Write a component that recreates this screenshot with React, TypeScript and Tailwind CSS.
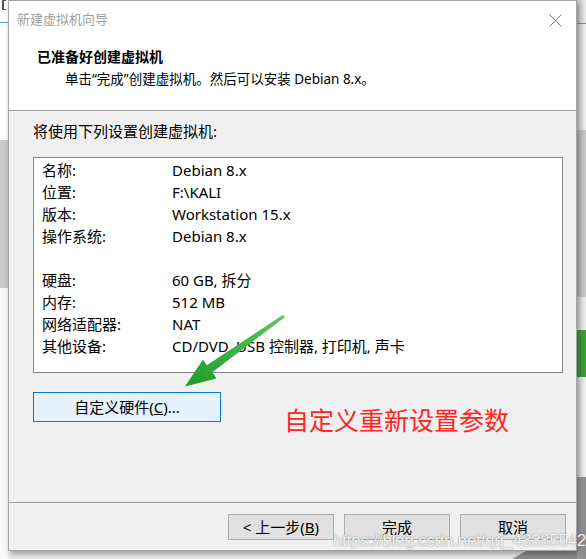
import React from "react";

const font = { fontFamily: '"Noto Sans", "Noto Sans CJK SC", sans-serif' };

const rows: [string, string][] = [
  ["名称:", "Debian 8.x"],
  ["位置:", "F:\\KALI"],
  ["版本:", "Workstation 15.x"],
  ["操作系统:", "Debian 8.x"],
  ["", ""],
  ["硬盘:", "60 GB, 拆分"],
  ["内存:", "512 MB"],
  ["网络适配器:", "NAT"],
  ["其他设备:", "CD/DVD, USB 控制器, 打印机, 声卡"],
];

function LeftStrip() {
  return (
    <div className="flex w-[8px] flex-col bg-white">
      <div className="h-[10px] w-[4px] ml-[2px] border-l-2 border-t border-b border-[#555]" />
      <div className="h-[12px]" />
      <div className="h-[1px] bg-[#5b9bd5]" />
      <div className="h-[117px]" />
      <div className="h-[148px] bg-[#c9c9c9]" />
      <div className="flex-1 bg-[#fafafa]" />
    </div>
  );
}

function RightStrip() {
  return (
    <div className="flex w-[9px] flex-col bg-[#f4f4f4]">
      <div className="h-[23px] bg-gradient-to-r from-[#c8c8c8] to-[#ececec]" />
      <div className="h-[1px] bg-[#5b9bd5]" />
      <div className="h-[106px] bg-gradient-to-r from-[#d0d0d0] to-[#f0f0f0]" />
      <div className="h-[167px] bg-gradient-to-r from-[#b8b8b8] to-[#cbcbcb]" />
      <div className="h-[33px] bg-gradient-to-r from-[#d8d8d8] to-[#eeeeee]" />
      <div className="h-[47px] bg-[#3f9a3f]" />
      <div className="h-[100px] bg-gradient-to-r from-[#d8d8d8] to-[#f2f2f2]" />
      <div className="flex-1 bg-gradient-to-r from-[#a0a0a0] to-[#8c8c8c]" />
    </div>
  );
}

export default function App() {
  return (
    <div className="flex h-[559px] w-[586px] overflow-hidden bg-white" style={font}>
      <LeftStrip />
      <div className="flex flex-col">
        <div className="relative z-10 flex h-[551px] w-[569px] flex-col border border-[#a5a5a5] bg-[#f0f0f0] shadow-[2px_3px_6px_rgba(0,0,0,0.35)]">
          {/* header */}
          <div className="flex h-[109px] flex-col bg-white">
            <div className="flex h-[38px] items-center justify-between pl-[8px] pr-[14px]">
              <span className="text-[13px] text-[#a0a0a0]">新建虚拟机向导</span>
              <svg width="13" height="13" viewBox="0 0 13 13">
                <path d="M0.5 0.5 L12.5 12.5 M12.5 0.5 L0.5 12.5" stroke="#7a7a7a" strokeWidth="1" />
              </svg>
            </div>
            <div className="pl-[28px] pt-[8px] text-[14px] font-bold leading-[20px] text-black">已准备好创建虚拟机</div>
            <div className="pl-[56px] pt-[2px] text-[13.5px] leading-[20px] text-black">
              单击“完成”创建虚拟机。然后可以安装 Debian 8.x。
            </div>
          </div>
          <div className="h-[1px] bg-[#a0a0a0]" />
          {/* body */}
          <div className="flex flex-1 flex-col pl-[24px] pr-[13px]">
            <div className="pt-[9px] text-[15px] leading-[22px] text-black">将使用下列设置创建虚拟机:</div>
            <div className="mt-[15px] flex h-[216px] flex-col border border-[#828790] bg-white pl-[8px] pt-[1px]">
              {rows.map(([k, v], i) => (
                <div key={i} className="flex h-[22px] items-center text-[15px] text-black">
                  <span className="w-[130px]">{k}</span>
                  <span>{v}</span>
                </div>
              ))}
            </div>
            <div className="mt-[19px] flex items-start">
              <button className="flex h-[30px] w-[188px] items-center justify-center border border-[#0078d7] bg-[#e5f1fb] text-[15px] text-black">
                自定义硬件(<span className="underline">C</span>)...
              </button>
              <span className="ml-[63px] mt-[13px] text-[25px] leading-[30px] text-[#ff2424]">自定义重新设置参数</span>
            </div>
          </div>
          <div className="h-[1px] bg-[#a0a0a0]" />
          {/* footer */}
          <div className="flex h-[47px] items-start justify-end gap-[10px] pr-[10px] pt-[11px]">
            <button className="flex h-[26px] w-[106px] items-center justify-center border border-[#adadad] bg-[#e1e1e1] text-[15px] text-black">
              &lt; 上一步(<span className="underline">B</span>)
            </button>
            <button className="flex h-[26px] w-[106px] items-center justify-center border border-[#adadad] bg-[#e1e1e1] text-[15px] text-black">
              完成
            </button>
            <button className="flex h-[26px] w-[106px] items-center justify-center border border-[#adadad] bg-[#e1e1e1] text-[15px] text-black">
              取消
            </button>
          </div>
          {/* arrow overlay */}
          <svg className="pointer-events-none absolute left-[-9px] top-[-1px]" width="586" height="559" viewBox="0 0 586 559">
            <defs>
              <linearGradient id="ag" x1="284" y1="316" x2="185" y2="386" gradientUnits="userSpaceOnUse">
                <stop offset="0" stopColor="#5cc85c" />
                <stop offset="1" stopColor="#1f9a2a" />
              </linearGradient>
            </defs>
            <polygon
              points="284.8,317.2 212.3,372.2 216.5,378.5 185,386.5 203,359.5 206.8,365.2 283.2,314.8"
              fill="url(#ag)"
            />
          </svg>
          <span
            className="pointer-events-none absolute left-[324px] top-[529px] text-[16.5px] leading-[20px] text-white/90"
            style={{
              fontFamily: '"Liberation Sans", sans-serif',
              textShadow: "0 0 1px rgba(90,90,90,0.7), 0 0 2px rgba(120,120,120,0.4)",
            }}
          >
            https://blog.csdn.net/qq_43385542
          </span>
        </div>
        <div className="flex-1 bg-[#ececec]">
          <svg width="569" height="8" viewBox="0 0 569 8" className="block">
            <polygon points="504,8 518,0 569,0 569,8" fill="#8e8e8e" />
          </svg>
        </div>
      </div>
      <RightStrip />
    </div>
  );
}
